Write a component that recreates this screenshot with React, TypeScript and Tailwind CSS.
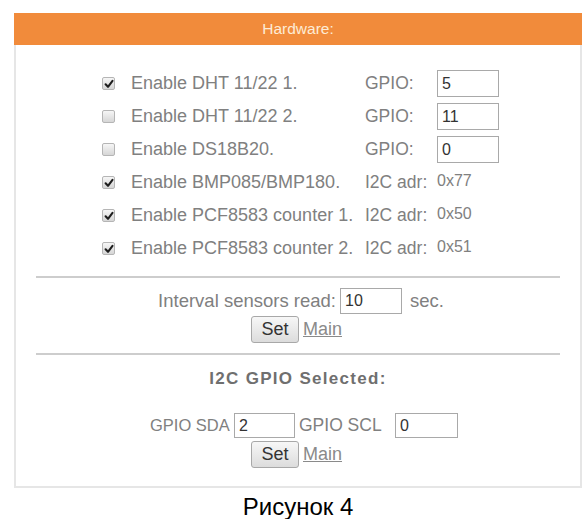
import React from "react";

const font = { fontFamily: '"Liberation Sans", Arial, sans-serif' };

function Check({ checked }: { checked: boolean }) {
  return (
    <div className="w-[13px] h-[13px] rounded-[2px] border border-[#b5b5b5] bg-gradient-to-b from-[#f6f6f6] to-[#d6d6d6] flex items-center justify-center">
      {checked && (
        <svg width="10" height="10" viewBox="0 0 10 10">
          <path d="M1.6 5.3 L4 7.8 L8.5 1.9" fill="none" stroke="#1e1e1e" strokeWidth="2.1" strokeLinecap="round" strokeLinejoin="round" />
        </svg>
      )}
    </div>
  );
}

function Field({ value, w = "w-[62px]", h = "h-[27px]" }: { value: string; w?: string; h?: string }) {
  return (
    <div className={`${w} ${h} border border-[#a9a9a9] bg-white flex items-center pl-[4px] text-[#333] text-[16px]`}>
      {value}
    </div>
  );
}

function SetMain() {
  return (
    <div className="flex items-center h-[27px] ml-[235px]">
      <div className="w-[48px] h-[27px] rounded-[3px] border border-[#a8a8a8] bg-gradient-to-b from-[#f7f7f7] to-[#dcdcdc] flex items-center justify-center text-[#333] text-[18px]">
        Set
      </div>
      <span className="ml-[4px] text-[#8a8a8a] text-[18px] underline">Main</span>
    </div>
  );
}

const rows: { checked: boolean; label: string; l2: string; value?: string; text?: string }[] = [
  { checked: true, label: "Enable DHT 11/22 1.", l2: "GPIO:", value: "5" },
  { checked: false, label: "Enable DHT 11/22 2.", l2: "GPIO:", value: "11" },
  { checked: false, label: "Enable DS18B20.", l2: "GPIO:", value: "0" },
  { checked: true, label: "Enable BMP085/BMP180.", l2: "I2C adr:", text: "0x77" },
  { checked: true, label: "Enable PCF8583 counter 1.", l2: "I2C adr:", text: "0x50" },
  { checked: true, label: "Enable PCF8583 counter 2.", l2: "I2C adr:", text: "0x51" },
];

export default function App() {
  return (
    <div className="w-[584px] h-[519px] bg-white overflow-hidden" style={font}>
      <div className="ml-[14px] mt-[13px] w-[568px]">
        <div className="h-[32px] bg-[#f18b3b] flex items-center justify-center text-[#fdebd6] text-[15.5px]">
          Hardware:
        </div>
        <div className="h-[443px] border-x-2 border-b-2 border-[#e6e6e6] text-[#808080]">
          <div className="pt-[22px] ml-[86px]">
            {rows.map((r, i) => (
              <div key={i} className="grid grid-cols-[29px_234px_72px_62px] h-[33px] items-center text-[18px]">
                <Check checked={r.checked} />
                <span className="whitespace-nowrap">{r.label}</span>
                <span className="whitespace-nowrap text-[17.5px]">{r.l2}</span>
                {r.value !== undefined ? (
                  <Field value={r.value} />
                ) : (
                  <span className="text-[16px] -translate-y-[2px]">{r.text}</span>
                )}
              </div>
            ))}
          </div>
          <div className="mx-[20px] mt-[11px] h-[2px] bg-[#cdcdcd]" />
          <div className="mt-[10px] flex items-center h-[26px] text-[18.5px] ml-[139px]">
            <span className="w-[181px] text-right whitespace-nowrap">Interval sensors read:</span>
            <div className="ml-[4px]">
              <Field value="10" h="h-[26px]" />
            </div>
            <span className="ml-[8px]">sec.</span>
          </div>
          <div className="mt-[2px]">
            <SetMain />
          </div>
          <div className="mx-[20px] mt-[10px] h-[2px] bg-[#cdcdcd]" />
          <div className="mt-[15px] h-[18px] flex justify-center items-center font-bold text-[17px] text-[#6f6f6f] tracking-[1.3px]">
            I2C GPIO Selected:
          </div>
          <div className="mt-[25px] flex items-center h-[25px] ml-[134px]">
            <span className="w-[80px] whitespace-nowrap text-[16.5px]">GPIO SDA</span>
            <div className="ml-[4px]">
              <Field value="2" w="w-[61px]" h="h-[25px]" />
            </div>
            <span className="ml-[4px] w-[88px] whitespace-nowrap text-[17.5px]">GPIO SCL</span>
            <div className="ml-[8px]">
              <Field value="0" w="w-[63px]" h="h-[25px]" />
            </div>
          </div>
          <div className="mt-[3px]">
            <SetMain />
          </div>
        </div>
        <div className="mt-[7px] text-center text-black text-[24px] leading-[24px]">Рисунок 4</div>
      </div>
    </div>
  );
}
